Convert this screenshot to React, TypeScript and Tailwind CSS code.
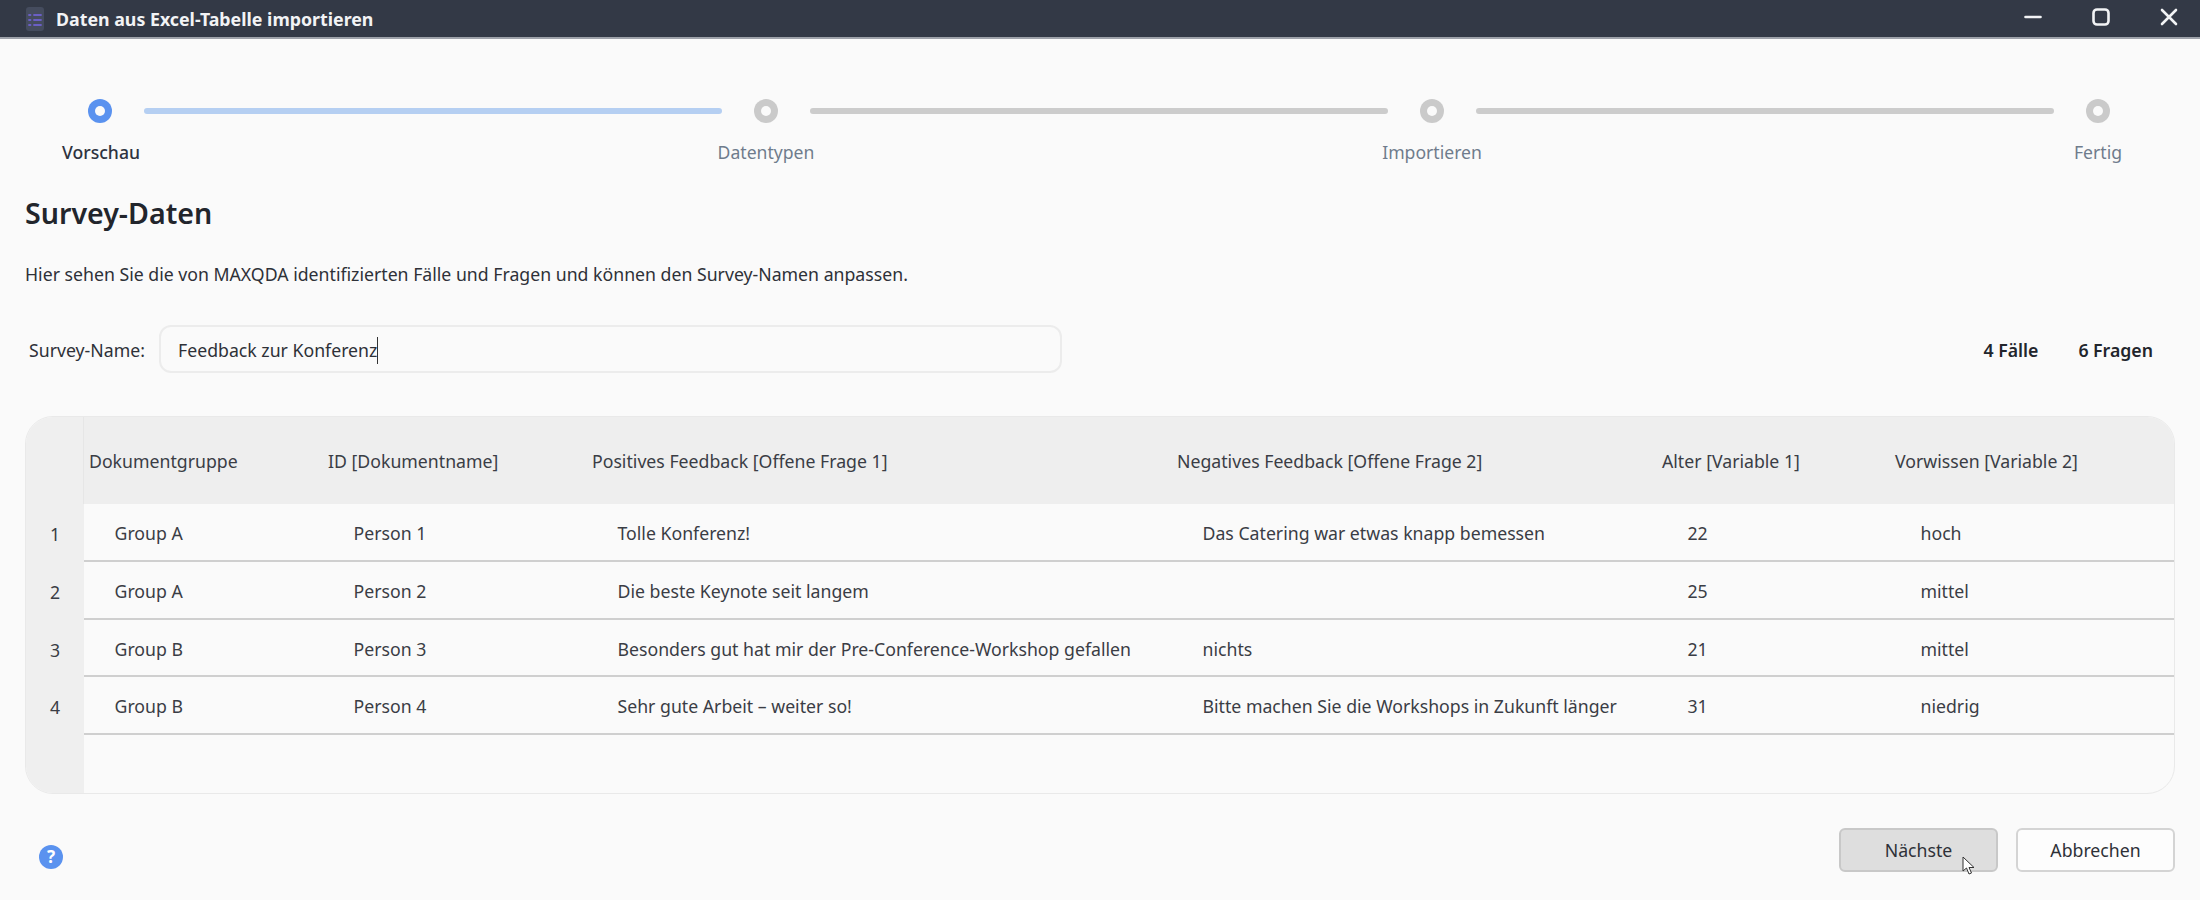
const font = "font-['Noto_Sans',sans-serif]";

const steps = [
  { label: "Vorschau", active: true },
  { label: "Datentypen", active: false },
  { label: "Importieren", active: false },
  { label: "Fertig", active: false },
];

const columns = [
  "Dokumentgruppe",
  "ID [Dokumentname]",
  "Positives Feedback [Offene Frage 1]",
  "Negatives Feedback [Offene Frage 2]",
  "Alter [Variable 1]",
  "Vorwissen [Variable 2]",
];

const rows = [
  ["Group A", "Person 1", "Tolle Konferenz!", "Das Catering war etwas knapp bemessen", "22", "hoch"],
  ["Group A", "Person 2", "Die beste Keynote seit langem", "", "25", "mittel"],
  ["Group B", "Person 3", "Besonders gut hat mir der Pre-Conference-Workshop gefallen", "nichts", "21", "mittel"],
  ["Group B", "Person 4", "Sehr gute Arbeit – weiter so!", "Bitte machen Sie die Workshops in Zukunft länger", "31", "niedrig"],
];

const gridCols = "grid grid-cols-[239px_264px_585px_485px_233px_1fr]";

function Stepper() {
  return (
    <div className="flex items-start pl-[60px] pr-[62px] pt-[60px]">
      {steps.map((step, i) => (
        <div key={step.label} className={i < steps.length - 1 ? "flex flex-1 items-start" : "flex items-start"}>
          <div className="flex w-[80px] flex-col items-center">
            <div
              className={
                step.active
                  ? "flex h-6 w-6 items-center justify-center rounded-full bg-[#5a92ef]"
                  : "flex h-6 w-6 items-center justify-center rounded-full bg-[#cacaca]"
              }
            >
              <div className="h-[10px] w-[10px] rounded-full bg-[#fafafa]" />
            </div>
            <div
              className={
                step.active
                  ? "mt-[17px] whitespace-nowrap pl-[2px] text-[17.6px] leading-[24px] font-medium text-[#2e3340]"
                  : "mt-[17px] whitespace-nowrap text-[17.6px] leading-[24px] text-[#6f7c8c]"
              }
            >
              {step.label}
            </div>
          </div>
          {i < steps.length - 1 && (
            <div
              className={
                step.active
                  ? "mt-[9px] ml-[4px] mr-[4px] h-[6px] flex-1 rounded-full bg-[#b5cff2]"
                  : "mt-[9px] ml-[4px] mr-[4px] h-[6px] flex-1 rounded-full bg-[#cccccc]"
              }
            />
          )}
        </div>
      ))}
    </div>
  );
}

function DataTable() {
  return (
    <div className="mx-[25px] mt-[43px] flex h-[378px] overflow-hidden rounded-[28px] border border-[#e9e9e9] text-[17.7px] text-[#3a3d45]">
      <div className="flex w-[58px] shrink-0 flex-col bg-[#efefef]">
        <div className="h-[87px] border-r border-[#e6e6e6]" />
        {rows.map((_, i) => (
          <div key={i} className="flex h-[57.75px] items-center justify-center pt-[3px]">
            {i + 1}
          </div>
        ))}
      </div>
      <div className="flex min-w-0 flex-1 flex-col">
        <div className={`${gridCols} h-[87px] items-center bg-[#eeeeee] pt-[2px]`}>
          {columns.map((c) => (
            <div key={c} className="whitespace-nowrap pl-[5px]">
              {c}
            </div>
          ))}
        </div>
        {rows.map((row, i) => (
          <div key={i} className={`${gridCols} h-[57.75px] items-center border-b-2 border-[#cfcfcf] pt-[3px]`}>
            {row.map((cell, j) => (
              <div key={j} className="whitespace-nowrap pl-[30.5px]">
                {cell}
              </div>
            ))}
          </div>
        ))}
      </div>
    </div>
  );
}

export default function App() {
  return (
    <div className={`${font} relative flex h-[900px] w-[2200px] flex-col overflow-hidden bg-[#fafafa]`}>
      <div className="flex h-[39px] shrink-0 items-center border-b-2 border-[#9ea2aa] bg-[#333946] pl-[26px] text-white">
        <svg width="18" height="24" viewBox="0 0 18 24" className="shrink-0">
          <rect width="18" height="24" rx="3" fill="#454c5e" />
          <g stroke="#6a5fc4" strokeWidth="1.8" strokeLinecap="round">
            <path d="M8 8h7M8 13h7M8 18h7" />
            <path d="M3 8h1.5M3 13h1.5M3 18h1.5" />
          </g>
        </svg>
        <span className="ml-[12px] pt-[1px] text-[17.8px] font-bold text-[#f2f3f5]">Daten aus Excel-Tabelle importieren</span>
        <div className="ml-auto flex items-center gap-[50px] pb-[3px] pr-[22px]">
          <svg width="18" height="18" viewBox="0 0 18 18">
            <path d="M1.5 9h15" stroke="#f2f3f5" strokeWidth="2.6" strokeLinecap="round" />
          </svg>
          <svg width="18" height="18" viewBox="0 0 18 18">
            <rect x="1.5" y="1.5" width="15" height="15" rx="3.5" fill="none" stroke="#f2f3f5" strokeWidth="2.6" />
          </svg>
          <svg width="18" height="18" viewBox="0 0 18 18">
            <path d="M2 2l14 14M16 2L2 16" stroke="#f2f3f5" strokeWidth="2.6" strokeLinecap="round" />
          </svg>
        </div>
      </div>

      <Stepper />

      <h1 className="ml-[25px] mt-[30px] text-[28.6px] leading-[38px] font-semibold text-[#22252c]">Survey-Daten</h1>
      <p className="ml-[25px] mt-[29px] text-[17.7px] leading-[26px] text-[#2e3138]">
        Hier sehen Sie die von MAXQDA identifizierten Fälle und Fragen und können den Survey-Namen anpassen.
      </p>

      <div className="mt-[38px] flex items-center pl-[29px] pr-[47px] text-[17.7px] text-[#2e3138]">
        <span className="w-[130px] pt-[3px]">Survey-Name:</span>
        <div className="flex h-[48px] w-[903px] items-center rounded-[12px] border-2 border-[#ececec] pl-[17px] pt-[3px]">
          <span>Feedback zur Konferenz</span>
          <span className="h-[27px] w-px bg-[#333333]" />
        </div>
        <span className="ml-auto pt-[3px] font-semibold text-[#22252c]">4 Fälle</span>
        <span className="ml-[40px] pt-[3px] font-semibold text-[#22252c]">6 Fragen</span>
      </div>

      <div className="shrink-0">
        <DataTable />
      </div>

      <div className="mt-[34px] flex items-start pl-[39px] pr-[25px] text-[17.7px] text-[#2e3138]">
        <div className="mt-[17px] flex h-6 w-6 items-center justify-center rounded-full bg-[#5a92ef] text-[17px] font-bold text-white">
          ?
        </div>
        <button className="ml-auto h-[44px] w-[159px] rounded-[6px] border-2 border-[#c8c8c8] bg-[#dedede]">
          Nächste
        </button>
        <button className="ml-[18px] h-[44px] w-[159px] rounded-[6px] border-2 border-[#d4d4d4] bg-[#fdfdfd]">
          Abbrechen
        </button>
      </div>

      <svg width="14" height="20" viewBox="0 0 14 20" className="absolute left-[1962px] top-[856px]">
        <path d="M1 1v14l3.5-3 2.5 6 2.5-1-2.5-5.5H12z" fill="#fff" stroke="#333" strokeWidth="1" />
      </svg>
    </div>
  );
}
